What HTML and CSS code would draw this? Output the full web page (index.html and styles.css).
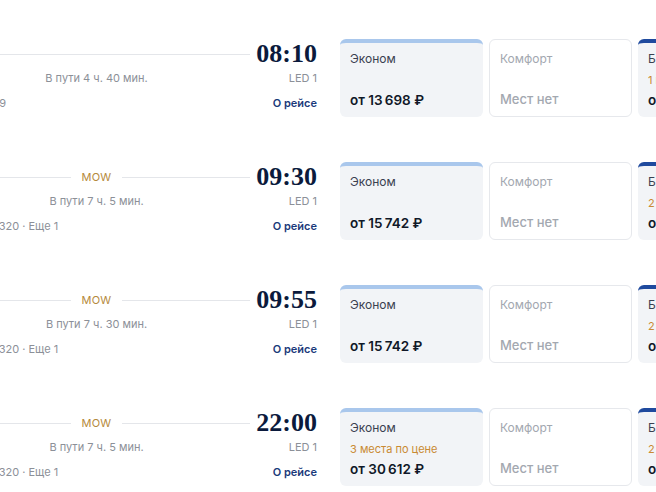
FILE: index.html
```html
<!DOCTYPE html>
<html lang="ru">
<head>
    <meta charset="utf-8">
    <title>Рейсы</title>
    <link rel="stylesheet" href="styles.css">
</head>
<body>
    <div class="list">
        <div class="flight">
            <div class="route">
                <div class="time">03:30</div>
                <div class="path"><div class="track"></div></div>
                <div class="time">08:10</div>
                <div class="airport">SVX 1</div>
                <div class="duration">В пути 4 ч. 40 мин.</div>
                <div class="airport end">LED 1</div>
                <div class="aircraft">Аэрофлот · Рейс SU 1119</div>
                <a class="details" href="#">О рейсе</a>
            </div>
            <div class="fares">
                <div class="fare economy">
                    <div class="fare-name">Эконом</div>
                    <div class="fare-price">от 13&#8239;698 ₽</div>
                </div>
                <div class="fare empty">
                    <div class="fare-name">Комфорт</div>
                    <div class="fare-price">Мест нет</div>
                </div>
                <div class="fare business">
                    <div class="fare-name">Бизнес</div>
                    <div class="fare-left">1 место по цене</div>
                    <div class="fare-price">от 42&#8239;300 ₽</div>
                </div>
            </div>
        </div>

        <div class="flight">
            <div class="route">
                <div class="time">02:25</div>
                <div class="path"><div class="track"><span class="stop">MOW</span></div></div>
                <div class="time">09:30</div>
                <div class="airport">SVX 1</div>
                <div class="duration">В пути 7 ч. 5 мин.</div>
                <div class="airport end">LED 1</div>
                <div class="aircraft">Аэрофлот · SU 1402 · A320 · Еще 1</div>
                <a class="details" href="#">О рейсе</a>
            </div>
            <div class="fares">
                <div class="fare economy">
                    <div class="fare-name">Эконом</div>
                    <div class="fare-price">от 15&#8239;742 ₽</div>
                </div>
                <div class="fare empty">
                    <div class="fare-name">Комфорт</div>
                    <div class="fare-price">Мест нет</div>
                </div>
                <div class="fare business">
                    <div class="fare-name">Бизнес</div>
                    <div class="fare-left">2 места по цене</div>
                    <div class="fare-price">от 51&#8239;200 ₽</div>
                </div>
            </div>
        </div>

        <div class="flight">
            <div class="route">
                <div class="time">02:25</div>
                <div class="path"><div class="track"><span class="stop">MOW</span></div></div>
                <div class="time">09:55</div>
                <div class="airport">SVX 1</div>
                <div class="duration">В пути 7 ч. 30 мин.</div>
                <div class="airport end">LED 1</div>
                <div class="aircraft">Аэрофлот · SU 1402 · A320 · Еще 1</div>
                <a class="details" href="#">О рейсе</a>
            </div>
            <div class="fares">
                <div class="fare economy">
                    <div class="fare-name">Эконом</div>
                    <div class="fare-price">от 15&#8239;742 ₽</div>
                </div>
                <div class="fare empty">
                    <div class="fare-name">Комфорт</div>
                    <div class="fare-price">Мест нет</div>
                </div>
                <div class="fare business">
                    <div class="fare-name">Бизнес</div>
                    <div class="fare-left">2 места по цене</div>
                    <div class="fare-price">от 51&#8239;200 ₽</div>
                </div>
            </div>
        </div>

        <div class="flight">
            <div class="route">
                <div class="time">14:55</div>
                <div class="path"><div class="track"><span class="stop">MOW</span></div></div>
                <div class="time">22:00</div>
                <div class="airport">SVX 1</div>
                <div class="duration">В пути 7 ч. 5 мин.</div>
                <div class="airport end">LED 1</div>
                <div class="aircraft">Аэрофлот · SU 1402 · A320 · Еще 1</div>
                <a class="details" href="#">О рейсе</a>
            </div>
            <div class="fares">
                <div class="fare economy">
                    <div class="fare-name">Эконом</div>
                    <div class="fare-left">3 места по цене</div>
                    <div class="fare-price">от 30&#8239;612 ₽</div>
                </div>
                <div class="fare empty">
                    <div class="fare-name">Комфорт</div>
                    <div class="fare-price">Мест нет</div>
                </div>
                <div class="fare business">
                    <div class="fare-name">Бизнес</div>
                    <div class="fare-left">2 места по цене</div>
                    <div class="fare-price">от 58&#8239;900 ₽</div>
                </div>
            </div>
        </div>
    </div>
</body>
</html>
```

FILE: styles.css
```css
body {
    font-family: Inter, 'Noto Sans', Arial, sans-serif;
    background: #fff;
    margin: 0;
    padding: 0;
    overflow: hidden;
    color: #0d1b3e;
}
.list {
    padding-top: 39px;
    margin-left: -124px;
}
.flight {
    display: flex;
    gap: 23px;
    margin-bottom: 45px;
}
.route {
    flex: none;
    width: 441px;
    display: grid;
    grid-template-columns: auto 1fr auto;
    grid-template-rows: 30px 18px 18px;
    column-gap: 6px;
    align-items: center;
}
.time {
    font-family: 'Liberation Serif', 'Times New Roman', serif;
    font-weight: bold;
    font-size: 26px;
    line-height: 30px;
    color: #0b1a3c;
}
.path {
    display: flex;
    align-items: center;
}
.track {
    flex: 1;
    display: flex;
    align-items: center;
}
.track::before,
.track::after {
    content: "";
    flex: 1;
    height: 1px;
    background: #e4e6ea;
}
.stop {
    padding: 0 11px;
    font-size: 11px;
    color: #b58a3c;
    letter-spacing: 0.2px;
}
.airport,
.duration,
.aircraft {
    font-size: 11px;
    color: #8c9098;
}
.duration {
    text-align: center;
}
.airport.end {
    text-align: right;
}
.aircraft {
    grid-column: 1 / 3;
    white-space: nowrap;
    margin-top: 14px;
}
.details {
    margin-top: 14px;
    text-align: right;
    font-size: 11px;
    font-weight: 600;
    color: #1b3a7a;
    text-decoration: none;
}
.fares {
    flex: none;
    display: flex;
    gap: 6px;
}
.fare {
    box-sizing: border-box;
    width: 143px;
    height: 78px;
    border-radius: 6px;
    padding: 8px 10px 8px;
    display: flex;
    flex-direction: column;
}
.economy {
    background: #f2f4f7;
    border-top: 4px solid #a9c7ec;
}
.business {
    background: #f2f4f7;
    border-top: 4px solid #1f4a9e;
}
.empty {
    background: #fff;
    border: 1px solid #e6e8ec;
    padding-top: 11px;
}
.fare-name {
    font-size: 12px;
    line-height: 16px;
    color: #3a4150;
}
.fare-left {
    font-size: 11px;
    line-height: 16px;
    margin-top: 5px;
    color: #c98a33;
}
.fare-price {
    margin-top: auto;
    font-size: 13.5px;
    line-height: 18px;
    font-weight: 600;
    color: #101828;
}
.empty .fare-name {
    color: #a3a8b0;
}
.empty .fare-price {
    font-size: 13px;
    font-weight: 500;
    color: #a3a8b0;
}
```
